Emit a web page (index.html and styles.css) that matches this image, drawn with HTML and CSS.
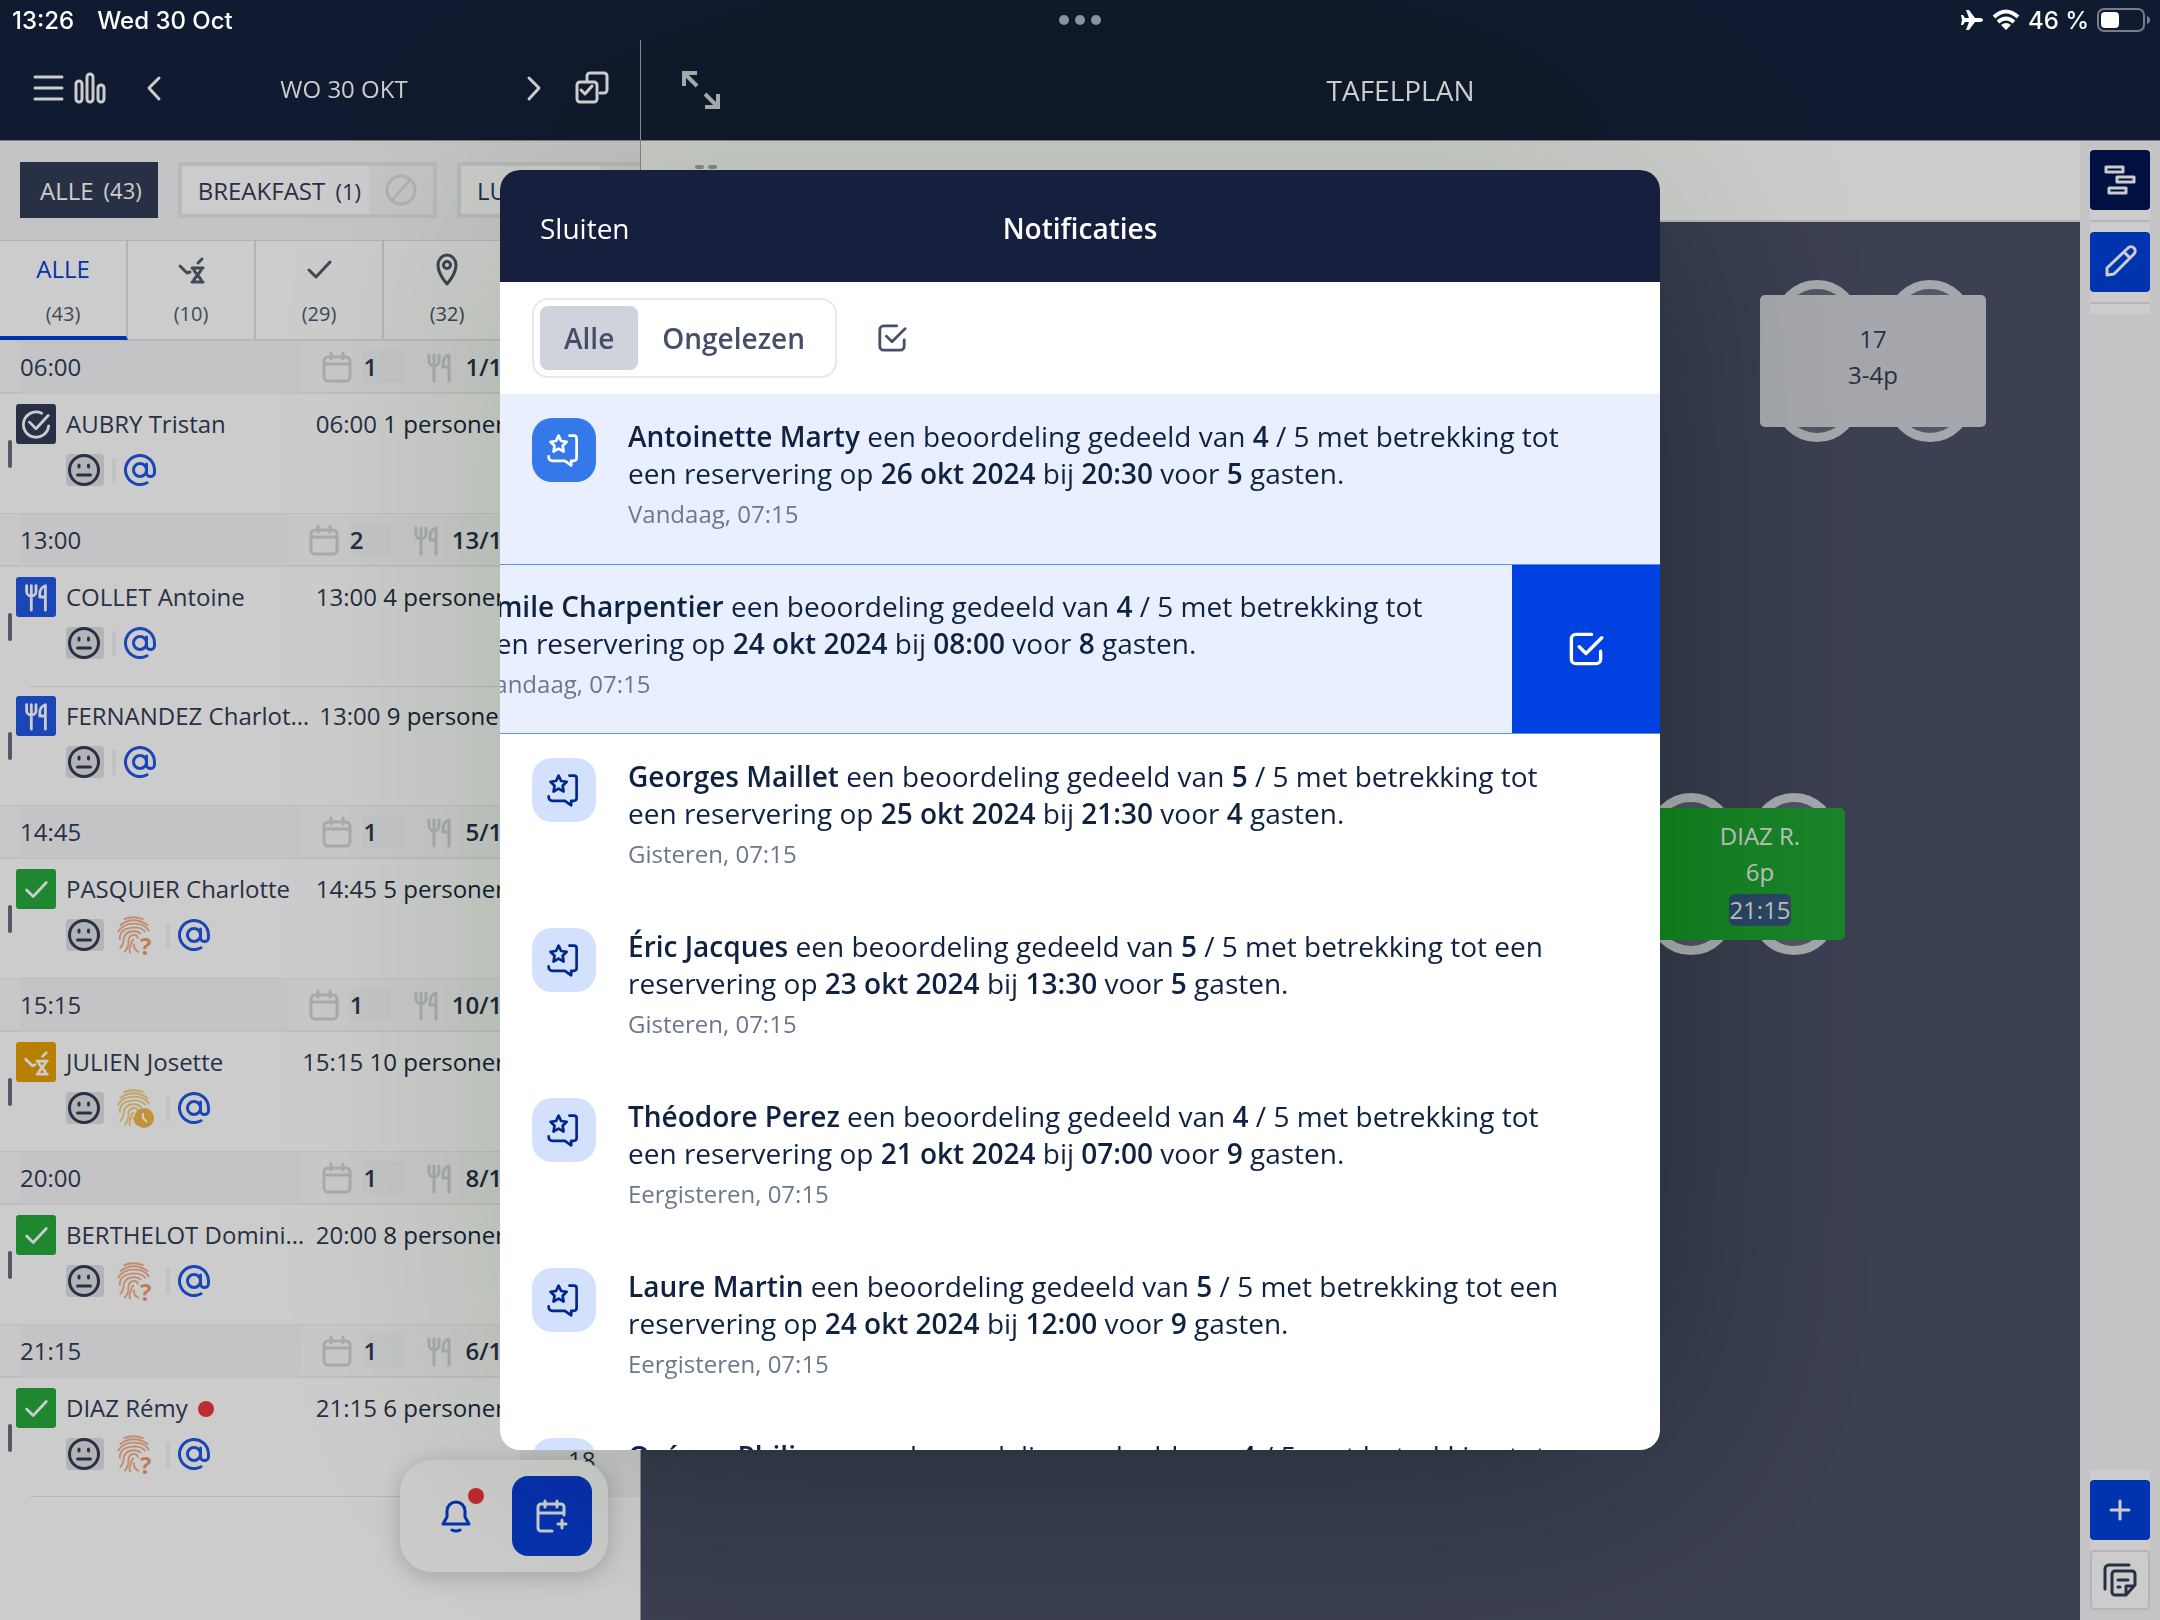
FILE: index.html
```html
<!DOCTYPE html>
<html lang="nl">
<head>
  <meta charset="utf-8">
  <title>Notificaties</title>
  <link rel="stylesheet" href="styles.css">
</head>
<body>
  <svg class="sprite" aria-hidden="true">
    <symbol id="i-calendar" viewBox="0 0 32 32">
      <rect x="3" y="6" width="26" height="24" rx="4"/><path d="M3 13h26M10 2v6M22 2v6"/>
    </symbol>
    <symbol id="i-fork" viewBox="0 0 32 32">
      <path d="M6 4v6a5 5 0 0 0 10 0V4M11 4v26M26 30V4q-6 2-6 9v3h6"/>
    </symbol>
    <symbol id="i-check" viewBox="0 0 32 32"><path d="M6 17l7 7L27 9"/></symbol>
    <symbol id="i-done" viewBox="0 0 32 32">
      <path d="M22 4.500A13.500 13.500 0 1 0 29.500 18M9 14l7 7L29 7"/>
    </symbol>
    <symbol id="i-wait" viewBox="0 0 32 32">
      <path d="M5 13l7 7 3-1M23 10l4-4M17 15h11M17 29h11M18.500 15c0 4 3 5 4 7c1-2 4-3 4-7M18.500 29c0-4 3-5 4-7c1 2 4 3 4 7"/>
    </symbol>
    <symbol id="i-face" viewBox="0 0 32 32">
      <circle cx="16" cy="16" r="14.500"/><path d="M9.500 21h13M11 11v2M20.500 11v2"/>
    </symbol>
    <symbol id="i-at" viewBox="0 0 32 32">
      <circle cx="16" cy="16" r="6.500"/><path d="M22.500 10v8.500a4 4 0 0 0 8 0V16A14.500 14.500 0 1 0 23 28.700"/>
    </symbol>
    <symbol id="i-finger" viewBox="0 0 40 40">
      <path d="M8 3.500Q18 -1 29 3.500M4 10Q18 -1 34 10M2 17Q7 8 19 8T35 16M4 25Q3 13 19 12q8 0 12 5M4 34Q8 30 8 25q1-9 11-9 5 0 8 4M9 38q5-6 4-12 1-6 6-6 4 0 4 4M15 39q-2-4 1-9 0-5 3-5M24 38q-6-3-5-9"/>
    </symbol>
    <symbol id="i-review" viewBox="0 0 40 40">
      <path d="M14 4l2.800 6 6.200.800-4.500 4.400 1.100 6.500L14 18.500l-5.600 3.200 1.100-6.500L5 10.800l6.200-.800zM26 4h5a3 3 0 0 1 3 3v22a3 3 0 0 1-3 3h-3v5l-7-5H7a4 4 0 0 1-4-4v-1"/>
    </symbol>
    <symbol id="i-tick" viewBox="0 0 32 32">
      <path d="M21 3H7a4 4 0 0 0-4 4v18a4 4 0 0 0 4 4h18a4 4 0 0 0 4-4v-7M10 14l6 6L30 6"/>
    </symbol>
  </svg>

  <div class="app">
    <header class="topbar">
      <div class="topbar-left">
        <button class="bare" aria-label="Menu"><svg class="icon" width="32" height="32" viewBox="0 0 32 32"><path d="M3 5h27M3 16h27M3 27h27"/></svg></button>
        <button class="bare" aria-label="Statistieken"><svg class="icon" width="32" height="32" viewBox="0 0 32 32"><rect x="2" y="9" width="6" height="21" rx="3"/><rect x="13" y="2" width="6" height="28" rx="3"/><rect x="24" y="13" width="6" height="17" rx="3"/></svg></button>
        <button class="bare prev" aria-label="Vorige dag"><svg class="icon" width="32" height="32" viewBox="0 0 32 32"><path d="M21 6L11 16l10 11"/></svg></button>
        <span class="date">WO 30 OKT</span>
        <button class="bare" aria-label="Volgende dag"><svg class="icon" width="32" height="32" viewBox="0 0 32 32"><path d="M11 6l10 10-10 11"/></svg></button>
        <button class="bare multi" aria-label="Selecteren"><svg class="icon" width="36" height="36" viewBox="0 0 36 36"><path d="M13 10V6a3 3 0 0 1 3-3h14a3 3 0 0 1 3 3v14a3 3 0 0 1-3 3h-4M7 20l4 4 7-8"/><rect x="3" y="12" width="20" height="20" rx="3"/></svg></button>
      </div>
      <div class="topbar-right">
        <button class="bare expand" aria-label="Vergroten"><svg width="40" height="40" viewBox="0 0 40 40"><path class="icon" d="M3 16V3h13M3 3l13 13M24 24l13 13M37 24v13H24"/></svg></button>
        <span class="plan-title">TAFELPLAN</span>
      </div>
    </header>

    <main class="content">
      <section class="bookings">
        <div class="services">
          <button class="service active">ALLE <small>(43)</small></button>
          <button class="service"><span>BREAKFAST <small>(1)</small></span><span class="blocked"><svg width="32" height="32" viewBox="0 0 32 32"><circle cx="16" cy="16" r="14"/><path d="M7 26L25 6"/></svg></span></button>
          <button class="service"><span>LUNCH <small>(2)</small></span><span class="blocked"></span></button>
        </div>
        <nav class="tabs">
          <a href="#" class="tab current"><b>ALLE</b><span>(43)</span></a>
          <a href="#" class="tab"><svg class="icon"><use href="#i-wait"/></svg><span>(10)</span></a>
          <a href="#" class="tab"><svg class="icon"><use href="#i-check"/></svg><span>(29)</span></a>
          <a href="#" class="tab"><svg class="icon" viewBox="0 0 32 32"><path d="M16 31C10 24 7 18 7 12a9 10 0 0 1 18 0c0 6-3 12-9 19z"/><circle cx="16" cy="12" r="3.500"/></svg><span>(32)</span></a>
          <a href="#" class="tab"></a>
        </nav>

        <div class="slot"><span class="slot-time">06:00</span><svg class="icon"><use href="#i-calendar"/></svg><span class="slot-count">1</span><svg class="icon"><use href="#i-fork"/></svg><span class="covers">1/18</span></div>
        <article class="booking">
          <span class="status done"><svg class="icon"><use href="#i-done"/></svg></span>
          <span class="name">AUBRY Tristan</span><span class="when">06:00 <b>1 personen</b></span>
          <div class="tags"><i class="face"><svg class="icon"><use href="#i-face"/></svg></i><i class="sep"></i><svg class="icon at"><use href="#i-at"/></svg></div>
          <span class="table-no"></span>
        </article>

        <div class="slot"><span class="slot-time">13:00</span><svg class="icon"><use href="#i-calendar"/></svg><span class="slot-count">2</span><svg class="icon"><use href="#i-fork"/></svg><span class="covers">13/18</span></div>
        <article class="booking">
          <span class="status seated"><svg class="icon"><use href="#i-fork"/></svg></span>
          <span class="name">COLLET Antoine</span><span class="when">13:00 <b>4 personen</b></span>
          <div class="tags"><i class="face"><svg class="icon"><use href="#i-face"/></svg></i><i class="sep"></i><svg class="icon at"><use href="#i-at"/></svg></div>
          <span class="table-no"></span>
        </article>
        <article class="booking">
          <span class="status seated"><svg class="icon"><use href="#i-fork"/></svg></span>
          <span class="name">FERNANDEZ Charlot…</span><span class="when">13:00 <b>9 personen</b></span>
          <div class="tags"><i class="face"><svg class="icon"><use href="#i-face"/></svg></i><i class="sep"></i><svg class="icon at"><use href="#i-at"/></svg></div>
          <span class="table-no"></span>
        </article>

        <div class="slot"><span class="slot-time">14:45</span><svg class="icon"><use href="#i-calendar"/></svg><span class="slot-count">1</span><svg class="icon"><use href="#i-fork"/></svg><span class="covers">5/18</span></div>
        <article class="booking">
          <span class="status ok"><svg class="icon"><use href="#i-check"/></svg></span>
          <span class="name">PASQUIER Charlotte</span><span class="when">14:45 <b>5 personen</b></span>
          <div class="tags"><i class="face"><svg class="icon"><use href="#i-face"/></svg></i><i class="finger"><svg><use href="#i-finger"/></svg><em>?</em></i><i class="sep"></i><svg class="icon at"><use href="#i-at"/></svg></div>
          <span class="table-no"></span>
        </article>

        <div class="slot"><span class="slot-time">15:15</span><svg class="icon"><use href="#i-calendar"/></svg><span class="slot-count">1</span><svg class="icon"><use href="#i-fork"/></svg><span class="covers">10/18</span></div>
        <article class="booking">
          <span class="status late"><svg class="icon"><use href="#i-wait"/></svg></span>
          <span class="name">JULIEN Josette</span><span class="when">15:15 <b>10 personen</b></span>
          <div class="tags"><i class="face"><svg class="icon"><use href="#i-face"/></svg></i><i class="finger pending"><svg><use href="#i-finger"/></svg><em class="clock"><svg viewBox="0 0 20 20"><path d="M9 5v5l4 4"/></svg></em></i><i class="sep"></i><svg class="icon at"><use href="#i-at"/></svg></div>
          <span class="table-no"></span>
        </article>

        <div class="slot"><span class="slot-time">20:00</span><svg class="icon"><use href="#i-calendar"/></svg><span class="slot-count">1</span><svg class="icon"><use href="#i-fork"/></svg><span class="covers">8/18</span></div>
        <article class="booking">
          <span class="status ok"><svg class="icon"><use href="#i-check"/></svg></span>
          <span class="name">BERTHELOT Domini…</span><span class="when">20:00 <b>8 personen</b></span>
          <div class="tags"><i class="face"><svg class="icon"><use href="#i-face"/></svg></i><i class="finger"><svg><use href="#i-finger"/></svg><em>?</em></i><i class="sep"></i><svg class="icon at"><use href="#i-at"/></svg></div>
          <span class="table-no"></span>
        </article>

        <div class="slot"><span class="slot-time">21:15</span><svg class="icon"><use href="#i-calendar"/></svg><span class="slot-count">1</span><svg class="icon"><use href="#i-fork"/></svg><span class="covers">6/18</span></div>
        <article class="booking">
          <span class="status ok"><svg class="icon"><use href="#i-check"/></svg></span>
          <span class="name">DIAZ Rémy <i class="dot"></i></span><span class="when">21:15 <b>6 personen</b></span>
          <div class="tags"><i class="face"><svg class="icon"><use href="#i-face"/></svg></i><i class="finger"><svg><use href="#i-finger"/></svg><em>?</em></i><i class="sep"></i><svg class="icon at"><use href="#i-at"/></svg></div>
          <span class="table-no">18</span>
        </article>

        <div class="fab">
          <button class="bell" aria-label="Notificaties"><svg class="icon" width="34" height="34" viewBox="0 0 34 34"><path d="M4 25h26l-4-7v-6a9 9 0 0 0-18 0v6zM13 31q4 2 8 0"/></svg><i class="dot"></i></button>
          <button class="add" aria-label="Nieuwe reservering"><svg class="icon" width="34" height="34" viewBox="0 0 34 34"><path d="M17 32H6a3 3 0 0 1-3-3V8a3 3 0 0 1 3-3h20a3 3 0 0 1 3 3v8M3 14h26M10 2v6M22 2v6M27 21v8M23 25h8"/></svg></button>
        </div>
      </section>

      <section class="plan">
        <div class="plan-tools"><i></i><i></i></div>
        <div class="floor">
          <div class="table free">
            <i class="chair a"></i><i class="chair b"></i><i class="chair c"></i><i class="chair d"></i>
            <div class="top"><span>17</span><span>3-4p</span></div>
          </div>
          <div class="table taken">
            <i class="chair a"></i><i class="chair b"></i><i class="chair c"></i><i class="chair d"></i>
            <div class="top"><span>DIAZ R.</span><span>6p</span><span class="at-time">21:15</span></div>
          </div>
        </div>
      </section>

      <aside class="rail">
        <div class="rail-group">
          <button class="rail-btn navy" aria-label="Tijdlijn"><svg class="icon" width="36" height="36" viewBox="0 0 36 36"><path d="M4 5h17v5H4zM15 15h17v5H15zM7 26h17v5H7z"/></svg></button>
          <hr>
          <button class="rail-btn" aria-label="Bewerken"><svg class="icon" width="36" height="36" viewBox="0 0 36 36"><path d="M5 31v-7L26 4a4 4 0 0 1 6 6L12 30zM22 8l6 6"/></svg></button>
          <hr>
        </div>
        <div class="rail-group">
          <button class="rail-btn" aria-label="Toevoegen"><svg class="icon" width="36" height="36" viewBox="0 0 36 36"><path d="M18 9v18M9 18h18"/></svg></button>
          <button class="rail-btn light" aria-label="Notities"><svg class="icon" width="36" height="36" viewBox="0 0 36 36"><path d="M3 27V7a4 4 0 0 1 4-4h20M13 9h17a3 3 0 0 1 3 3v11l-9 10H13a3 3 0 0 1-3-3V12a3 3 0 0 1 3-3zM16 18h10M16 25h2M24 32v-8h8"/></svg></button>
        </div>
      </aside>
    </main>
  </div>

  <div class="dim"></div>
  <div class="shade"></div>

  <div class="device-bar">
    <span>13:26</span><span>Wed 30 Oct</span>
    <div class="grip"><i></i><i></i><i></i></div>
    <svg class="plane" width="24" height="22" viewBox="0 0 24 22"><path d="M23 11c0 1-1 2-3 2h-5l-6 8H6l3-8H5l-2 3H1l1-5-1-5h2l2 3h4L6 1h3l6 8h5c2 0 3 1 3 2z"/></svg>
    <svg class="wifi" width="28" height="22" viewBox="0 0 28 22"><path d="M2 8q12-11 24 0M6 13q8-7 16 0"/><path class="solid" d="M9 16q5-4 10 0l-5 5z"/></svg>
    <span>46 %</span>
    <svg width="54" height="24" viewBox="0 0 54 24"><rect class="shell" x="1" y="1" width="46" height="22" rx="6"/><rect x="4" y="4" width="18" height="16" rx="4"/><path class="nub" d="M50 8q3 1 3 4t-3 4z"/></svg>
  </div>

  <div class="modal" role="dialog" aria-label="Notificaties">
    <div class="modal-head">
      <button class="bare">Sluiten</button>
      <h1>Notificaties</h1>
    </div>
    <div class="modal-tools">
      <div class="switch"><button class="on">Alle</button><button>Ongelezen</button></div>
      <button class="bare" aria-label="Alles gelezen"><svg class="icon" width="30" height="30"><use href="#i-tick"/></svg></button>
    </div>
    <div class="notes">
      <div class="note unread">
        <span class="badge"><svg class="icon"><use href="#i-review"/></svg></span>
        <div><p><b>Antoinette Marty</b> een beoordeling gedeeld van <b>4</b> / 5 met betrekking tot<br>een reservering op <b>26 okt 2024</b> bij <b>20:30</b> voor <b>5</b> gasten.</p><time>Vandaag, 07:15</time></div>
      </div>
      <div class="note unread swiped">
        <span class="badge"><svg class="icon"><use href="#i-review"/></svg></span>
        <div><p><b>Émile Charpentier</b> een beoordeling gedeeld van <b>4</b> / 5 met betrekking tot<br>een reservering op <b>24 okt 2024</b> bij <b>08:00</b> voor <b>8</b> gasten.</p><time>Vandaag, 07:15</time></div>
        <button class="mark" aria-label="Markeer als gelezen"><svg class="icon" width="36" height="36"><use href="#i-tick"/></svg></button>
      </div>
      <div class="note">
        <span class="badge"><svg class="icon"><use href="#i-review"/></svg></span>
        <div><p><b>Georges Maillet</b> een beoordeling gedeeld van <b>5</b> / 5 met betrekking tot<br>een reservering op <b>25 okt 2024</b> bij <b>21:30</b> voor <b>4</b> gasten.</p><time>Gisteren, 07:15</time></div>
      </div>
      <div class="note">
        <span class="badge"><svg class="icon"><use href="#i-review"/></svg></span>
        <div><p><b>Éric Jacques</b> een beoordeling gedeeld van <b>5</b> / 5 met betrekking tot een<br>reservering op <b>23 okt 2024</b> bij <b>13:30</b> voor <b>5</b> gasten.</p><time>Gisteren, 07:15</time></div>
      </div>
      <div class="note">
        <span class="badge"><svg class="icon"><use href="#i-review"/></svg></span>
        <div><p><b>Théodore Perez</b> een beoordeling gedeeld van <b>4</b> / 5 met betrekking tot<br>een reservering op <b>21 okt 2024</b> bij <b>07:00</b> voor <b>9</b> gasten.</p><time>Eergisteren, 07:15</time></div>
      </div>
      <div class="note">
        <span class="badge"><svg class="icon"><use href="#i-review"/></svg></span>
        <div><p><b>Laure Martin</b> een beoordeling gedeeld van <b>5</b> / 5 met betrekking tot een<br>reservering op <b>24 okt 2024</b> bij <b>12:00</b> voor <b>9</b> gasten.</p><time>Eergisteren, 07:15</time></div>
      </div>
      <div class="note">
        <span class="badge"><svg class="icon"><use href="#i-review"/></svg></span>
        <div><p><b>Océane Philippe</b> een beoordeling gedeeld van <b>4</b> / 5 met betrekking tot</p></div>
      </div>
    </div>
  </div>
</body>
</html>
```

FILE: styles.css
```css
* {
  box-sizing: border-box;
}

body {
  margin: 0;
  height: 100vh;
  overflow: hidden;
  background: #fff;
  color: #333d57;
  font-family: "Open Sans", "Noto Sans", sans-serif;
  font-size: 24px;
  font-weight: 500;
}

button {
  font: inherit;
  color: inherit;
  padding: 0;
  border: 0;
  background: none;
  cursor: pointer;
}

.sprite {
  position: absolute;
  width: 0;
  height: 0;
}

.icon {
  fill: none;
  stroke: currentColor;
  stroke-width: 3;
  stroke-linecap: round;
  stroke-linejoin: round;
}

.bare {
  display: flex;
}

.app {
  display: flex;
  flex-direction: column;
  height: 100vh;
}

/* top bar, drawn above the dim layer with its own dimmed colours */
.topbar {
  position: relative;
  z-index: 1;
  display: flex;
  height: 141px;
  padding-top: 40px;
  background: radial-gradient(ellipse 800px 260px at 50% 100%, #0d1926 40%, #101a31);
  border-bottom: 1px solid #7c7c7c;
  color: #ccc;
}

.topbar-left {
  display: flex;
  align-items: center;
  width: 641px;
  padding: 0 30px 4px 32px;
  gap: 10px;
  border-right: 1px solid #888;
}

.prev {
  margin-left: 22px;
}

.date {
  flex: 1;
  text-align: center;
}

.multi {
  margin-left: 14px;
}

.topbar-right {
  flex: 1;
  display: flex;
  align-items: center;
  padding: 0 40px;
}

.expand {
  color: #a4a8a8;
}

.expand .icon {
  stroke-width: 4;
  stroke-linecap: butt;
  stroke-linejoin: miter;
}

.plan-title {
  flex: 1;
  padding-right: 40px;
  text-align: center;
  font-size: 28px;
}

.content {
  flex: 1;
  display: flex;
  min-height: 0;
}

/* bookings column */
.bookings {
  position: relative;
  width: 641px;
  flex-shrink: 0;
  overflow: hidden;
  border-right: 1px solid #aaa;
}

.services {
  display: flex;
  gap: 20px;
  height: 99px;
  padding: 21px 0 22px 20px;
  background: #f5f5f8;
}

.service {
  display: flex;
  flex-shrink: 0;
  align-items: center;
  height: 56px;
  border: 4px solid #e6e8eb;
  background: #fff;
}

.service small {
  margin-left: 4px;
  font-size: 22px;
}

.service > span:first-child {
  padding: 0 8px 0 16px;
}

.service.active {
  gap: 6px;
  padding: 0 12px 0 16px;
  border-color: #333d57;
  background: #333d57;
  color: #fff;
}

.blocked {
  display: flex;
  align-items: center;
  justify-content: center;
  width: 64px;
  height: 48px;
  background: #f5f5f8;
}

.blocked svg {
  fill: none;
  stroke: #dcdee2;
  stroke-width: 3;
}

.tabs {
  display: flex;
  height: 100px;
}

.tab {
  display: flex;
  flex: 0 0 128px;
  flex-direction: column;
  align-items: center;
  justify-content: space-between;
  padding: 10px 0 12px;
  border: 1px solid #dfe1e3;
  border-left: 0;
  border-right-width: 2px;
  color: #525a6d;
  font-size: 20px;
  text-decoration: none;
}

.tab b {
  font-size: 24px;
  font-weight: 500;
  line-height: 36px;
}

.tab svg {
  width: 32px;
  height: 36px;
}

.tab.current {
  border-bottom: 4px solid #0041da;
  padding-bottom: 9px;
}

.tab.current b {
  color: #0041da;
}

.slot {
  display: flex;
  align-items: center;
  height: 54px;
  padding: 0 124px 0 20px;
  gap: 10px;
  background: #fafafa;
  border-bottom: 2px solid #eee;
  border-top: 1px solid #eee;
}

.slot-time {
  flex: 1;
  margin-right: 10px;
  background: #f5f5f8;
  line-height: 52px;
}

.slot .icon {
  width: 32px;
  height: 32px;
  color: #d4d6da;
}

.slot-count {
  width: 40px;
  margin-right: 10px;
  background: #f5f5f8;
}

.slot-count,
.covers {
  font-weight: 600;
}

.booking {
  display: grid;
  grid-template-columns: 40px 1fr auto 120px;
  grid-template-rows: 40px 32px;
  column-gap: 10px;
  row-gap: 10px;
  height: 119px;
  padding: 10px 0 0 16px;
  position: relative;
}

.booking::before {
  content: "";
  position: absolute;
  left: 8px;
  top: 46px;
  width: 4px;
  height: 28px;
  border-radius: 2px;
  background: #666e82;
}

.booking + .booking,
.booking:has(+ .fab) {
  background: linear-gradient(#e4e6e6, #e4e6e6) 30px 0 / 100% 1px no-repeat;
}

.booking:has(+ .fab) {
  background-position: 30px 100%;
}

.status {
  display: flex;
  align-items: center;
  justify-content: center;
  border-radius: 3px;
  color: #fff;
}

.status .icon {
  width: 30px;
  height: 30px;
}

.done { background: #333d57; }
.seated { background: #2158e4; }
.ok { background: #27a93c; }
.late { background: #e6a000; }

.name {
  line-height: 40px;
  white-space: nowrap;
}

.when {
  line-height: 40px;
  white-space: nowrap;
}

.when b {
  font-weight: 500;
  color: #28324c;
}

.table-no {
  grid-area: 1 / 4 / 3 / 5;
  height: 119px;
  margin-top: -10px;
  padding: 18px 0 0 48px;
  background: #f5f5f8;
  line-height: 128px;
}

.tags {
  grid-area: 2 / 2 / 3 / 4;
  display: flex;
  align-items: center;
  gap: 8px;
}

.tags svg {
  width: 32px;
  height: 32px;
}

.face {
  display: flex;
  width: 38px;
  height: 32px;
  padding-left: 2px;
  border-radius: 4px;
  background: #e1e2e5;
}

.sep {
  width: 4px;
  height: 25px;
  background: #f3f3f4;
}

.at {
  color: #2158e4;
}

.finger {
  position: relative;
  display: flex;
  margin: 0 4px;
  color: #f2b18c;
}

.finger svg {
  width: 38px;
  height: 40px;
  fill: none;
  stroke: currentColor;
  stroke-width: 2;
}

.finger em {
  position: absolute;
  right: -2px;
  bottom: -3px;
  width: 16px;
  background: #fff;
  color: #ee9d6e;
  font-size: 24px;
  font-style: normal;
  font-weight: 700;
  line-height: 24px;
}

.finger.pending {
  color: #f3ce82;
}

.finger .clock {
  right: 0;
  bottom: 0;
  width: 20px;
  height: 20px;
  border-radius: 10px;
  background: #f2b64b;
}

.clock svg {
  display: block;
  width: 20px;
  height: 20px;
  stroke: #fff;
}

.dot {
  display: inline-block;
  width: 16px;
  height: 16px;
  margin-left: 4px;
  border-radius: 8px;
  background: #ee383f;
}

.fab {
  position: absolute;
  right: 32px;
  bottom: 48px;
  display: flex;
  align-items: center;
  width: 208px;
  height: 112px;
  padding: 0 16px;
  justify-content: space-between;
  border-radius: 32px;
  background: #fff;
  box-shadow: 0 4px 24px rgba(0, 0, 0, .2);
}

.bell {
  position: relative;
  display: flex;
  align-items: center;
  justify-content: center;
  width: 80px;
  height: 80px;
  color: #0041da;
}

.bell .dot {
  position: absolute;
  right: 12px;
  top: 12px;
}

.add {
  display: flex;
  align-items: center;
  justify-content: center;
  width: 80px;
  height: 80px;
  border-radius: 16px;
  background: #0041da;
  color: #fff;
}

/* floor plan */
.plan {
  flex: 1;
  display: flex;
  flex-direction: column;
}

.plan-tools {
  display: flex;
  gap: 4px;
  height: 81px;
  padding: 24px 54px;
  border-bottom: 2px solid #e0e0e0;
}

.plan-tools i {
  width: 9px;
  height: 4px;
  border-radius: 2px;
  background: #aeb2b8;
}

.floor {
  position: relative;
  flex: 1;
  background: #4b5168;
}

.table {
  position: absolute;
}

.top {
  position: relative;
  display: flex;
  flex-direction: column;
  align-items: center;
  justify-content: center;
  height: 132px;
  padding-bottom: 8px;
  border-radius: 5px;
  background: #d0d1d7;
  line-height: 36px;
}

.free {
  left: 1119px;
  top: 73px;
  width: 226px;
}

.taken {
  left: 896px;
  top: 586px;
  width: 308px;
}

.taken .top {
  padding: 0 0 4px 138px;
  background: #23a537;
  color: #f0f0f0;
}

.at-time {
  margin-top: 4px;
  border-radius: 6px;
  background: #3a5a80;
  line-height: 32px;
}

.chair {
  position: absolute;
  width: 86px;
  height: 86px;
  border: 9px solid #d0d1d7;
  border-radius: 50%;
  background: #646d80;
}

.a, .b { top: -15px; }
.c, .d { bottom: -15px; }
.a, .c { right: 126px; }
.b, .d { right: 13px; }

.taken .b,
.taken .d {
  right: 8px;
}

.taken .a,
.taken .c {
  right: 111px;
}

/* right rail */
.rail {
  display: flex;
  flex-direction: column;
  justify-content: space-between;
  width: 80px;
  padding: 9px 10px 10px;
  background: #f5f5f8;
}

.rail-group {
  display: flex;
  flex-direction: column;
  gap: 10px;
  padding-bottom: 10px;
  background: #fff;
}

.rail-group:last-child {
  padding: 10px 0 0;
}

.rail-group hr {
  width: 100%;
  margin: 0;
  border: 0;
  border-top: 2px solid #e4e4e6;
}

.rail-btn {
  display: flex;
  align-items: center;
  justify-content: center;
  height: 60px;
  border-radius: 4px;
  background: #0041da;
  color: #fff;
}

.rail-btn.navy {
  background: #001452;
}

.rail-btn.light {
  border: 2px solid #e4e4e6;
  background: #fff;
  color: #333d57;
}

/* layers over the app */
.dim {
  position: fixed;
  inset: 0;
  background: rgba(0, 0, 0, .2);
}

.shade {
  position: fixed;
  inset: 170px calc(50% - 580px);
  border-radius: 20px;
  box-shadow: 0 0 400px rgb(32, 24, 36);
  mix-blend-mode: difference;
}

.device-bar {
  position: fixed;
  z-index: 2;
  top: 0;
  left: 0;
  right: 0;
  display: flex;
  align-items: center;
  gap: 8px;
  height: 40px;
  padding: 0 9px 0 12px;
  color: #fff;
  fill: #fff;
  font-family: Inter, sans-serif;
}

.device-bar span + span {
  margin-left: 15px;
}

.grip {
  position: absolute;
  left: 50%;
  display: flex;
  gap: 6px;
  transform: translateX(-50%);
}

.grip i {
  width: 10px;
  height: 10px;
  border-radius: 5px;
  background: #8d939d;
}

.plane {
  margin-left: auto;
}

.wifi path {
  fill: none;
  stroke: #fff;
  stroke-width: 4;
}

.wifi .solid {
  fill: #fff;
  stroke: none;
}

.shell {
  fill: none;
  stroke: #777d8a;
  stroke-width: 2;
}

.nub {
  fill: #777d8a;
}

/* notifications */
.modal {
  position: fixed;
  top: 170px;
  left: 50%;
  display: flex;
  flex-direction: column;
  width: 1160px;
  max-width: 100vw;
  height: calc(100vh - 340px);
  transform: translateX(-50%);
  overflow: hidden;
  border-radius: 20px;
  background: #fff;
  color: #0f2242;
  font-size: 28px;
  font-weight: 400;
}

.modal-head {
  display: grid;
  grid-template-columns: 1fr auto 1fr;
  align-items: center;
  flex-shrink: 0;
  height: 112px;
  padding: 4px 40px 0;
  background: #16203e;
  color: #fff;
}

.modal-head h1 {
  margin: 0;
  font-size: 28px;
  font-weight: 600;
}

.modal-tools {
  display: flex;
  align-items: center;
  flex-shrink: 0;
  gap: 40px;
  height: 112px;
  padding: 0 32px;
  color: #44506a;
}

.switch {
  display: flex;
  padding: 6px;
  border: 2px solid #e6e8ed;
  border-radius: 16px;
}

.switch button {
  height: 64px;
  padding: 0 24px;
  border-radius: 8px;
  font-weight: 600;
}

.switch .on {
  background: #d0d3dc;
}

.note {
  display: flex;
  gap: 32px;
  height: 170px;
  padding: 24px 32px 0;
}

.note p {
  margin: 0;
  line-height: 37px;
  white-space: nowrap;
}

.note b {
  font-weight: 600;
}

.note time {
  display: block;
  margin-top: 6px;
  color: #6c778c;
  font-size: 24px;
  line-height: 32px;
}

.badge {
  display: flex;
  align-items: center;
  justify-content: center;
  flex-shrink: 0;
  width: 64px;
  height: 64px;
  border-radius: 20px;
  background: #d4e1fd;
  color: #00288c;
}

.badge .icon {
  width: 36px;
  height: 36px;
}

.unread {
  background: #e9effe;
}

.unread .badge {
  background: #3478ea;
  color: #fff;
}

.swiped {
  margin-left: -148px;
  padding-top: 23px;
  border: solid #5b94ea;
  border-width: 1px 0;
}

.mark {
  display: flex;
  align-items: center;
  justify-content: center;
  width: 148px;
  margin: -23px -32px 0 auto;
  background: #0041e1;
  color: #fff;
}
```
